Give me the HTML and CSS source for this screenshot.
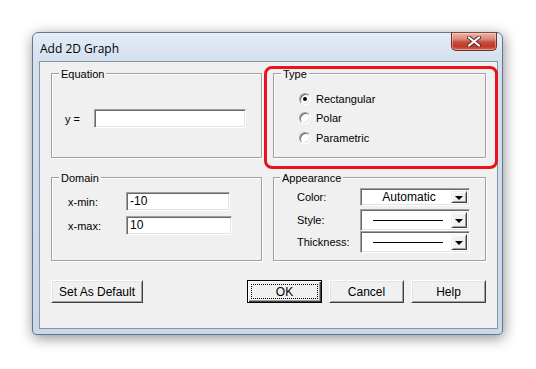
FILE: index.html
```html
<!DOCTYPE html>
<html>
<head>
<meta charset="utf-8">
<link rel="stylesheet" href="styles.css">
</head>
<body>
<div class="window">
  <div class="titlebar">
    <span class="title">Add 2D Graph</span>
    <div class="close">
      <svg width="14" height="11" viewBox="0 0 14 11">
        <path d="M2 1.5 L12 9.5 M12 1.5 L2 9.5" stroke="#5a2a24" stroke-width="4" stroke-linecap="round"/>
        <path d="M2 1.5 L12 9.5 M12 1.5 L2 9.5" stroke="#ffffff" stroke-width="2.2" stroke-linecap="round"/>
      </svg>
    </div>
  </div>
  <div class="client">
    <div class="groups">
      <div class="group">
        <div class="legend">Equation</div>
        <div class="eq-row">
          <span class="eq-label">y =</span>
          <div class="field eq-field"></div>
        </div>
      </div>
      <div class="group type-group">
        <div class="legend">Type</div>
        <div class="radios">
          <div class="radio-row"><span class="radio checked"></span><span>Rectangular</span></div>
          <div class="radio-row"><span class="radio"></span><span>Polar</span></div>
          <div class="radio-row"><span class="radio"></span><span>Parametric</span></div>
        </div>
        <div class="highlight"></div>
      </div>
      <div class="group">
        <div class="legend">Domain</div>
        <div class="domain">
          <div class="dom-row"><span class="dom-label">x-min:</span><div class="field dom-min">-10</div></div>
          <div class="dom-row"><span class="dom-label">x-max:</span><div class="field dom-max">10</div></div>
        </div>
      </div>
      <div class="group app-group">
        <div class="legend">Appearance</div>
        <div class="appearance">
          <div class="app-row row-color">
            <span class="app-label">Color:</span>
            <div class="combo combo-color">
              <span class="combo-text">Automatic</span>
              <span class="drop"><span class="arrow"></span></span>
            </div>
          </div>
          <div class="app-row row-style">
            <span class="app-label">Style:</span>
            <div class="combo combo-line">
              <span class="combo-text"><span class="line"></span></span>
              <span class="drop"><span class="arrow"></span></span>
            </div>
          </div>
          <div class="app-row row-style">
            <span class="app-label">Thickness:</span>
            <div class="combo combo-line">
              <span class="combo-text"><span class="line"></span></span>
              <span class="drop"><span class="arrow"></span></span>
            </div>
          </div>
        </div>
      </div>
    </div>
    <div class="buttons">
      <div class="btn btn-default-set">Set As Default</div>
      <div class="btn btn-ok"><span class="focus">OK</span></div>
      <div class="btn">Cancel</div>
      <div class="btn">Help</div>
    </div>
  </div>
</div>
</body>
</html>
```

FILE: styles.css
```css
* { box-sizing: border-box; }
html, body { margin: 0; padding: 0; background: #ffffff; }
body {
  font-family: "Liberation Sans", Arial, sans-serif;
  font-size: 11px;
  color: #000;
  width: 536px;
  height: 369px;
  overflow: hidden;
}
.window {
  margin: 32px 0 0 32px;
  width: 471px;
  height: 303px;
  border: 1px solid #66778c;
  border-radius: 6px 6px 4px 4px;
  background: linear-gradient(#e4ecf5 0px, #d3e0ee 28px, #c9d8ea 100%);
  box-shadow: 1px 3px 14px rgba(0,0,0,0.45);
  padding: 0 4px 5px 6px;
  display: flex;
  flex-direction: column;
}
.titlebar {
  height: 28px;
  display: flex;
  align-items: flex-start;
}
.title {
  font-family: "Open Sans", "Noto Sans", sans-serif;
  font-size: 12px;
  line-height: 16px;
  margin-top: 8px;
  margin-left: 1px;
  color: #000;
}
.close {
  margin-left: auto;
  margin-top: -1px;
  margin-right: 1px;
  width: 46px;
  height: 19px;
  border: 1px solid #6e2e26;
  border-top-color: #8a453b;
  border-radius: 0 0 5px 5px;
  background: linear-gradient(#eab3a6 0%, #dc8c7c 35%, #c8493a 55%, #c13a29 80%, #d66a50 100%);
  box-shadow: inset 0 0 0 1px rgba(255,255,255,0.35);
  display: flex;
  align-items: center;
  justify-content: center;
}
.close svg { display: block; }
.client {
  background: #f0f0f0;
  border: 1px solid #8a949f;
  height: 268px;
  padding: 11px 11px 0 11px;
}
.groups {
  display: grid;
  grid-template-columns: 211px 213px;
  grid-template-rows: 85px 84px;
  column-gap: 11px;
  row-gap: 19px;
}
.group {
  border: 1px solid #a0a0a0;
  box-shadow: inset 1px 1px 0 #ffffff, 1px 1px 0 #ffffff;
  position: relative;
}
.legend {
  display: block;
  width: fit-content;
  height: 13px;
  line-height: 13px;
  margin: -6px 0 0 7px;
  padding: 0 2px;
  background: #f0f0f0;
}
.app-group .legend { margin-left: 6px; }

/* Equation */
.eq-row {
  display: flex;
  align-items: center;
  margin: 28px 0 0 13px;
}
.eq-label { width: 29px; }
.field {
  background: #fff;
  border: 1px solid;
  border-color: #a0a0a0 #ffffff #ffffff #a0a0a0;
  box-shadow: inset 1px 1px 0 #696969, inset -1px -1px 0 #e3e3e3;
  height: 19px;
  line-height: 17px;
  padding-left: 3px;
  font-size: 12px;
}
.eq-field { width: 152px; }

/* Type */
.radios {
  margin: 8px 0 0 25px;
}
.radio-row {
  display: flex;
  align-items: center;
  height: 19.5px;
  gap: 5px;
}
.radio {
  width: 12px;
  height: 12px;
  border-radius: 50%;
  border: 1px solid;
  border-color: #a0a0a0 #ffffff #ffffff #a0a0a0;
  background: #fff;
  box-shadow: inset 1px 1px 0 #696969, inset -1px -1px 0 #e3e3e3;
  display: flex;
  align-items: center;
  justify-content: center;
}
.radio.checked::after {
  content: "";
  width: 4px;
  height: 4px;
  border-radius: 50%;
  background: #000;
}
.highlight {
  position: absolute;
  left: -10px;
  top: -8px;
  right: -13px;
  bottom: -12px;
  border: 3px solid #e8141b;
  border-radius: 8px;
  pointer-events: none;
}

/* Domain */
.domain {
  margin: 7px 0 0 16px;
  display: flex;
  flex-direction: column;
  gap: 5px;
}
.dom-row {
  display: flex;
  align-items: center;
}
.dom-label { width: 58px; }
.dom-min { width: 104px; }
.dom-max { width: 106px; }

/* Appearance */
.appearance {
  margin: 3px 0 0 23px;
  display: flex;
  flex-direction: column;
}
.app-row {
  display: flex;
  align-items: center;
}
.row-color { margin-bottom: 3px; }
.app-label { width: 63px; }
.combo {
  width: 110px;
  background: #fff;
  border: 1px solid;
  border-color: #a0a0a0 #ffffff #ffffff #a0a0a0;
  box-shadow: inset 1px 1px 0 #696969, inset -1px -1px 0 #e3e3e3;
  display: flex;
  padding: 2px;
}
.combo-color { height: 18px; }
.combo-line { height: 22px; }
.combo-text {
  flex: 1;
  display: flex;
  align-items: center;
  justify-content: center;
  font-size: 12px;
}
.combo-color .combo-text { padding-left: 4px; }
.line {
  display: block;
  width: 70px;
  height: 1px;
  background: #000;
  margin-left: 2px;
}
.drop {
  width: 16px;
  background: #f0f0f0;
  border: 1px solid;
  border-color: #f0f0f0 #404040 #404040 #f0f0f0;
  box-shadow: inset 1px 1px 0 #ffffff, inset -1px -1px 0 #a0a0a0;
  display: flex;
  align-items: center;
  justify-content: center;
}
.arrow {
  width: 0;
  height: 0;
  border-left: 4px solid transparent;
  border-right: 4px solid transparent;
  border-top: 4px solid #000;
  margin-top: 1px;
}

/* Buttons */
.buttons {
  display: flex;
  margin-top: 19px;
  gap: 7px;
}
.btn {
  width: 75px;
  height: 23px;
  background: #f0f0f0;
  border: 1px solid;
  border-color: #ffffff #404040 #404040 #ffffff;
  box-shadow: inset 1px 1px 0 #e3e3e3, inset -1px -1px 0 #a0a0a0;
  display: flex;
  align-items: center;
  justify-content: center;
  font-size: 12px;
}
.btn-default-set {
  width: 92px;
  margin-right: auto;
}
.btn-ok {
  border: 1px solid #000;
  box-shadow: inset 1px 1px 0 #ffffff, inset -1px -1px 0 #404040, inset -2px -2px 0 #a0a0a0;
  padding: 3px;
}
.btn-ok .focus {
  flex: 1;
  align-self: stretch;
  display: flex;
  align-items: center;
  justify-content: center;
  border: 1px dotted #000;
}
```
